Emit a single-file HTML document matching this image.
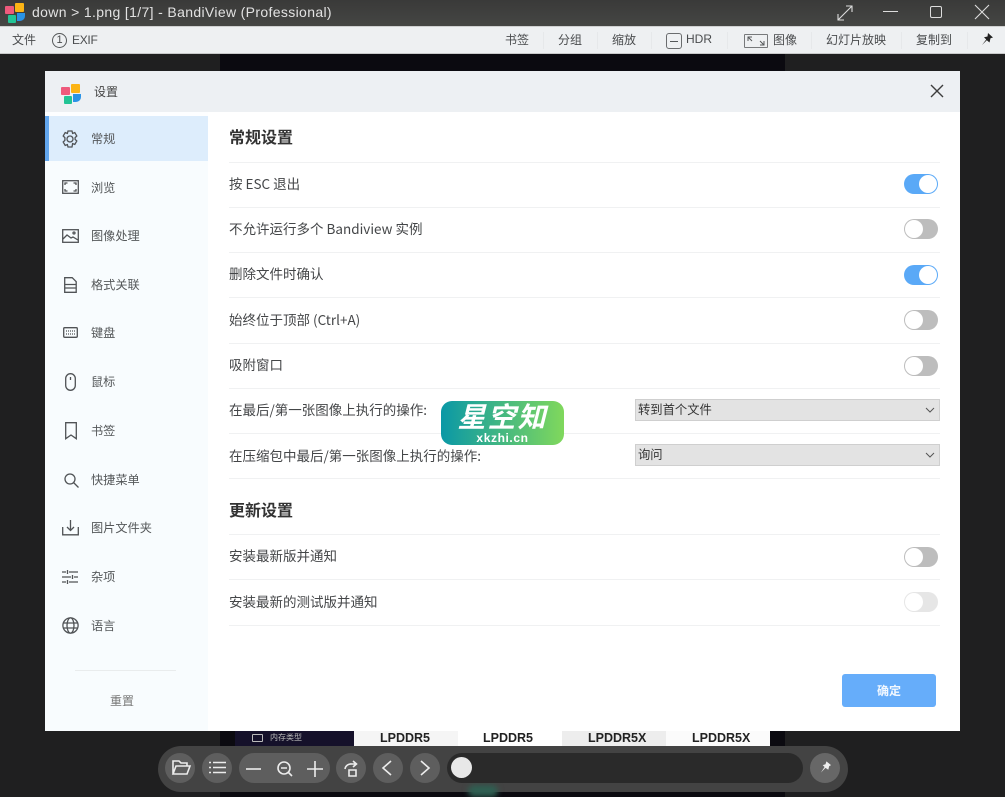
<!DOCTYPE html>
<html><head><meta charset="utf-8"><style>
*{box-sizing:border-box}
html,body{margin:0;padding:0;width:1005px;height:797px;overflow:hidden;background:#1f1f20;font-family:"Liberation Sans","Noto Sans CJK SC",sans-serif}
#r{position:absolute;left:0;top:0;width:1005px;height:797px;overflow:hidden;filter:blur(.35px)}
.a{position:absolute;white-space:nowrap;line-height:1}
.m{font-size:12px;color:#4a4c4e;top:34px}
.n{font-size:12.2px;color:#55585a;left:91px}
.l{font-size:13.5px;color:#444648;left:229px;font-family:"Noto Sans CJK SC","Liberation Sans",sans-serif}
.h{position:absolute;left:229px;width:711px;height:1px;background:#f0f1f2}
.t{position:absolute;left:904px;width:34px;height:20px;border-radius:10px;background:#bdbdbd}
.t:after{content:"";position:absolute;left:1px;top:1px;width:18px;height:18px;border-radius:50%;background:#fff}
.t.on{background:#5aa9f7}
.t.on:after{left:15px}
.t.dis{background:#e6e6e6}
.s{position:absolute;left:635px;width:305px;height:22px;background:#e3e3e3;border:1px solid #cfcfcf;font-size:12.3px;color:#333;line-height:20px;padding-left:2px}
.sep{position:absolute;top:32px;width:1px;height:17px;background:#e6e8ea}
svg{position:absolute;overflow:visible}
.i{fill:none;stroke:#505356;stroke-width:1.3}
.b{position:absolute;top:753px;height:30px;border-radius:15px;background:#5e5e5e}
.w{fill:none;stroke:#ececec;stroke-width:1.6}
</style></head><body><div id="r">
<div class="a" style="left:220px;top:54px;width:565px;height:743px;background:#0b0a10"></div>
<div class="a" style="left:0;top:0;width:1005px;height:26px;background:linear-gradient(#3a3a39,#454644)"></div>
<div class="a" style="left:0;top:26px;width:1005px;height:1px;background:#cfd0d0"></div>
<div class="a" style="left:0;top:27px;width:1005px;height:27px;background:#eef0f2;border-bottom:1px solid #c8c9ca"></div>
<svg style="left:5px;top:2px" width="21" height="21" viewBox="0 0 21 21"><rect x="0" y="4" width="9" height="8" rx="1" fill="#ee5a7c"/><rect x="10" y="1" width="9" height="9" rx="1" fill="#fcb415"/><rect x="3" y="13" width="8" height="8" rx="1" fill="#22c495"/><path d="M12 11h8v3a5 5 0 0 1-5 5h-3z" fill="#2a93e6"/></svg>
<div class="a" style="left:32px;top:5px;font-size:14px;color:#e2e2e2;letter-spacing:.35px">down &gt; 1.png [1/7] - BandiView (Professional)</div>
<svg style="left:836px;top:4px" width="18" height="18" viewBox="0 0 18 18" fill="none" stroke="#ddd" stroke-width="1.1"><path d="M2 16L16 2M10 2h6v6M2 10v6h6"/></svg>
<div class="a" style="left:883px;top:11px;width:15px;height:1px;background:#ddd"></div>
<div class="a" style="left:930px;top:6px;width:12px;height:12px;border:1px solid #ddd;border-radius:2px"></div>
<svg style="left:975px;top:5px" width="14" height="14" fill="none" stroke="#ddd" stroke-width="1.1"><path d="M0 0L14 14M14 0L0 14"/></svg>
<div class="a m" style="left:12px">文件</div>
<div class="a" style="left:52px;top:33px;width:15px;height:15px;border:1px solid #55585a;border-radius:50%;font-size:11px;line-height:13px;text-align:center;color:#4a4c4e">1</div>
<div class="a m" style="left:72px;letter-spacing:-.3px">EXIF</div>
<div class="a m" style="left:505px">书签</div><div class="sep" style="left:543px"></div>
<div class="a m" style="left:558px">分组</div><div class="sep" style="left:597px"></div>
<div class="a m" style="left:612px">缩放</div><div class="sep" style="left:651px"></div>
<div class="a" style="left:666px;top:33px;width:16px;height:16px;border:1px solid #6a6c6e;border-radius:3px"></div><div class="a" style="left:670px;top:41px;width:8px;height:1px;background:#55585a"></div>
<div class="a m" style="left:686px;top:33px">HDR</div><div class="sep" style="left:727px"></div>
<div class="a" style="left:744px;top:34px;width:24px;height:14px;border:1px solid #77797b;border-radius:1px"></div>
<svg style="left:744px;top:34px" width="24" height="14" fill="none" stroke="#55585a"><path d="M4 7V3h4M4 3l4 4M20 7v4h-4M20 11l-4-4"/></svg>
<div class="a m" style="left:773px">图像</div><div class="sep" style="left:811px"></div>
<div class="a m" style="left:826px">幻灯片放映</div><div class="sep" style="left:901px"></div>
<div class="a m" style="left:916px">复制到</div><div class="sep" style="left:967px"></div>
<svg style="left:980px;top:32px" width="14" height="15" viewBox="0 0 14 15"><path d="M8 1l5 4.500-2.500.8-1 4.200-2.700-2.300L2 13l4.200-5.500L4 5.200l3.500-.7z" fill="#222"/></svg>

<div class="a" style="left:45px;top:71px;width:915px;height:660px;background:#fff"></div>
<div class="a" style="left:45px;top:71px;width:915px;height:41px;background:#edf0f3"></div>
<div class="a" style="left:45px;top:116px;width:163px;height:615px;background:#f8fcfe"></div>
<div class="a" style="left:45px;top:112px;width:163px;height:4px;background:#fdfeff"></div>
<div class="a" style="left:45px;top:116px;width:163px;height:45px;background:#ddedfc"></div>
<div class="a" style="left:45px;top:116px;width:4px;height:45px;background:#62a6ee"></div>
<svg style="left:61px;top:83px" width="21" height="21" viewBox="0 0 21 21"><rect x="0" y="4" width="9" height="8" rx="1" fill="#ee5a7c"/><rect x="10" y="1" width="9" height="9" rx="1" fill="#fcb415"/><rect x="3" y="13" width="8" height="8" rx="1" fill="#22c495"/><path d="M12 11h8v3a5 5 0 0 1-5 5h-3z" fill="#2a93e6"/></svg>
<div class="a" style="left:94px;top:86px;font-size:12px;color:#444">设置</div>
<svg style="left:931px;top:85px" width="12" height="12" fill="none" stroke="#3d3d3d" stroke-width="1.4"><path d="M0 0L12 12M12 0L0 12"/></svg>

<svg class="i" style="left:61px;top:130px" width="18" height="18" viewBox="0 0 18 18"><circle cx="9" cy="9" r="3"/><path d="M7 1h4l.6 2.400 2.200-.8 2 3.400-1.700 1.600v1.800l1.700 1.600-2 3.400-2.200-.8L11 17H7l-.6-2.400-2.200.8-2-3.400L3.900 10.400V7.600L2.200 6l2-3.400 2.200.8z"/></svg>
<div class="a n" style="top:133px">常规</div>
<svg class="i" style="left:62px;top:180px" width="17" height="14"><rect x=".7" y=".7" width="15.600" height="12.600"/><path d="M3 5V3h2.500M14 5V3h-2.500M3 9v2h2.500M14 9v2h-2.500"/></svg>
<div class="a n" style="top:182px">浏览</div>
<svg class="i" style="left:62px;top:229px" width="17" height="14"><rect x=".7" y=".7" width="15.600" height="12.600"/><path d="M1 10l4-4 4 3 2-1 5 3"/><circle cx="12" cy="4" r="1"/></svg>
<div class="a n" style="top:230px">图像处理</div>
<svg class="i" style="left:64px;top:277px" width="13" height="16"><path d="M.7.7h7.500l4 4v10.600H.7zM1 7.500h11M1 11h11"/></svg>
<div class="a n" style="top:279px">格式关联</div>
<svg class="i" style="left:63px;top:327px" width="15" height="11"><rect x=".7" y=".7" width="13.600" height="9.600" rx="1"/><path d="M3 4h9M3 7h9" stroke-dasharray="1 1"/></svg>
<div class="a n" style="top:327px">键盘</div>
<svg class="i" style="left:65px;top:373px" width="11" height="18"><rect x=".7" y=".7" width="9.600" height="16.600" rx="4.800"/><path d="M5.500 4v3"/></svg>
<div class="a n" style="top:376px">鼠标</div>
<svg class="i" style="left:65px;top:422px" width="12" height="18"><path d="M.7.7h10.600v16L6 13 .7 16.700z"/></svg>
<div class="a n" style="top:425px">书签</div>
<svg class="i" style="left:64px;top:473px" width="15" height="15"><circle cx="6" cy="6" r="5"/><path d="M9.500 9.500L14.500 14.500"/></svg>
<div class="a n" style="top:474px">快捷菜单</div>
<svg class="i" style="left:62px;top:519px" width="17" height="17"><path d="M.7 8v7.800h15.600V8M8.500 1v10M5 8l3.500 3.500L12 8"/></svg>
<div class="a n" style="top:522px">图片文件夹</div>
<svg class="i" style="left:62px;top:570px" width="16" height="14"><path d="M0 2h4M7 2h9M0 7h9M12 7h4M0 12h4M7 12h9M5.500 0v4M10.500 5v4M5.500 10v4"/></svg>
<div class="a n" style="top:571px">杂项</div>
<svg class="i" style="left:62px;top:617px" width="17" height="17"><circle cx="8.500" cy="8.500" r="7.600"/><ellipse cx="8.500" cy="8.500" rx="3.500" ry="7.600"/><path d="M1 6h15M1 11h15"/></svg>
<div class="a n" style="top:620px">语言</div>
<div class="a" style="left:75px;top:670px;width:101px;height:1px;background:#e9eced"></div>
<div class="a" style="left:110px;top:695px;font-size:12px;color:#777">重置</div>

<div class="a" style="left:229px;top:131px;font-size:16px;font-weight:bold;color:#333">常规设置</div>
<div class="h" style="top:162px"></div>
<div class="a l" style="top:177px">按 ESC 退出</div><div class="t on" style="top:174px"></div>
<div class="h" style="top:207px"></div>
<div class="a l" style="top:222px">不允许运行多个 Bandiview 实例</div><div class="t" style="top:219px"></div>
<div class="h" style="top:252px"></div>
<div class="a l" style="top:267px">删除文件时确认</div><div class="t on" style="top:265px"></div>
<div class="h" style="top:297px"></div>
<div class="a l" style="top:313px">始终位于顶部 (Ctrl+A)</div><div class="t" style="top:310px"></div>
<div class="h" style="top:343px"></div>
<div class="a l" style="top:358px">吸附窗口</div><div class="t" style="top:356px"></div>
<div class="h" style="top:388px"></div>
<div class="a l" style="top:403px">在最后/第一张图像上执行的操作:</div>
<div class="s" style="top:399px">转到首个文件</div>
<svg style="left:925px;top:407px" width="10" height="6" fill="none" stroke="#555"><path d="M1 1l4 4 4-4"/></svg>
<div class="h" style="top:433px"></div>
<div class="a l" style="top:449px">在压缩包中最后/第一张图像上执行的操作:</div>
<div class="s" style="top:444px">询问</div>
<svg style="left:925px;top:452px" width="10" height="6" fill="none" stroke="#555"><path d="M1 1l4 4 4-4"/></svg>
<div class="h" style="top:478px"></div>
<div class="a" style="left:229px;top:504px;font-size:16px;font-weight:bold;color:#333">更新设置</div>
<div class="h" style="top:534px"></div>
<div class="a l" style="top:549px">安装最新版并通知</div><div class="t" style="top:547px"></div>
<div class="h" style="top:579px"></div>
<div class="a l" style="top:595px">安装最新的测试版并通知</div><div class="t dis" style="top:592px"></div>
<div class="h" style="top:625px"></div>
<div class="a" style="left:842px;top:674px;width:94px;height:33px;background:#66adfa;border-radius:3px;color:#f2f8ff;font-size:12px;font-weight:bold;text-align:center;line-height:34px">确定</div>

<div class="a" style="left:441px;top:401px;width:123px;height:44px;border-radius:11px;background:linear-gradient(90deg,#0a98a6,#80d85c)"></div>
<div class="a" style="left:441px;top:404px;width:123px;text-align:center;font-size:28px;font-weight:bold;font-style:italic;color:#fff;letter-spacing:2px">星空知</div>
<div class="a" style="left:441px;top:432px;width:123px;text-align:center;font-size:12px;font-weight:bold;color:#fff;letter-spacing:.6px">xkzhi.cn</div>

<div class="a" style="left:235px;top:731px;width:119px;height:16px;background:#15112a"></div>
<div class="a" style="left:270px;top:734px;font-size:8px;color:#bbb">内存类型</div>
<div class="a" style="left:252px;top:734px;width:11px;height:8px;border:1px solid #bbb;border-radius:1px"></div>
<div class="a" style="left:354px;top:731px;width:416px;height:16px;background:linear-gradient(90deg,#f5f5f5 0,#f5f5f5 25%,#fff 25%,#fff 50%,#ededed 50%,#ededed 75%,#fbfbfb 75%)"></div>
<div class="a" style="left:380px;top:732px;font-size:12.5px;font-weight:bold;color:#222">LPDDR5</div>
<div class="a" style="left:483px;top:732px;font-size:12.5px;font-weight:bold;color:#222">LPDDR5</div>
<div class="a" style="left:588px;top:732px;font-size:12.5px;font-weight:bold;color:#222">LPDDR5X</div>
<div class="a" style="left:692px;top:732px;font-size:12.5px;font-weight:bold;color:#222">LPDDR5X</div>

<div class="a" style="left:158px;top:746px;width:690px;height:46px;border-radius:23px;background:#434343"></div>
<div class="a" style="left:468px;top:785px;width:30px;height:12px;border-radius:6px;background:#2f5f52;filter:blur(3px)"></div>
<div class="b" style="left:165px;width:30px"></div>
<div class="b" style="left:202px;width:30px"></div>
<div class="b" style="left:239px;width:91px"></div>
<div class="b" style="left:336px;width:30px"></div>
<div class="b" style="left:373px;width:30px"></div>
<div class="b" style="left:410px;width:30px"></div>
<div class="b" style="left:447px;width:356px;background:#2a2a2a"></div>
<div class="a" style="left:451px;top:757px;width:21px;height:21px;border-radius:50%;background:#e8e8e8"></div>
<div class="b" style="left:810px;width:30px;background:#676767"></div>
<svg class="w" style="left:171px;top:760px" width="20" height="16"><path d="M2 14V1h6l2 2h6v3M2 14l3-8h14l-3 8z"/></svg>
<svg class="w" style="left:209px;top:761px" width="18" height="13"><path d="M4 1.500h13M4 6.500h13M4 11.500h13M0 1.500h2M0 6.500h2M0 11.500h2"/></svg>
<svg class="w" style="left:246px;top:768px" width="16" height="2"><path d="M0 1h15"/></svg>
<svg class="w" style="left:277px;top:761px" width="16" height="16"><circle cx="7" cy="7" r="6"/><path d="M4 7h6M11 11l4 4"/></svg>
<svg class="w" style="left:307px;top:761px" width="16" height="16"><path d="M0 8h16M8 0v16"/></svg>
<svg class="w" style="left:344px;top:760px" width="15" height="17"><path d="M1 9a6 6 0 0 1 7-5h4M9 1l3.500 3L9 7M5 10h7v6H5z"/></svg>
<svg class="w" style="left:382px;top:760px" width="10" height="16"><path d="M9 1L1 8l8 7"/></svg>
<svg class="w" style="left:420px;top:760px" width="10" height="16"><path d="M1 1l8 7-8 7"/></svg>
<svg style="left:819px;top:760px" width="13" height="14" viewBox="0 0 14 14"><path d="M8 1l5 4-2 1-1 4-3-2-5 5 4-6-2-2 3-1z" fill="#eee"/></svg>
</div></body></html>
